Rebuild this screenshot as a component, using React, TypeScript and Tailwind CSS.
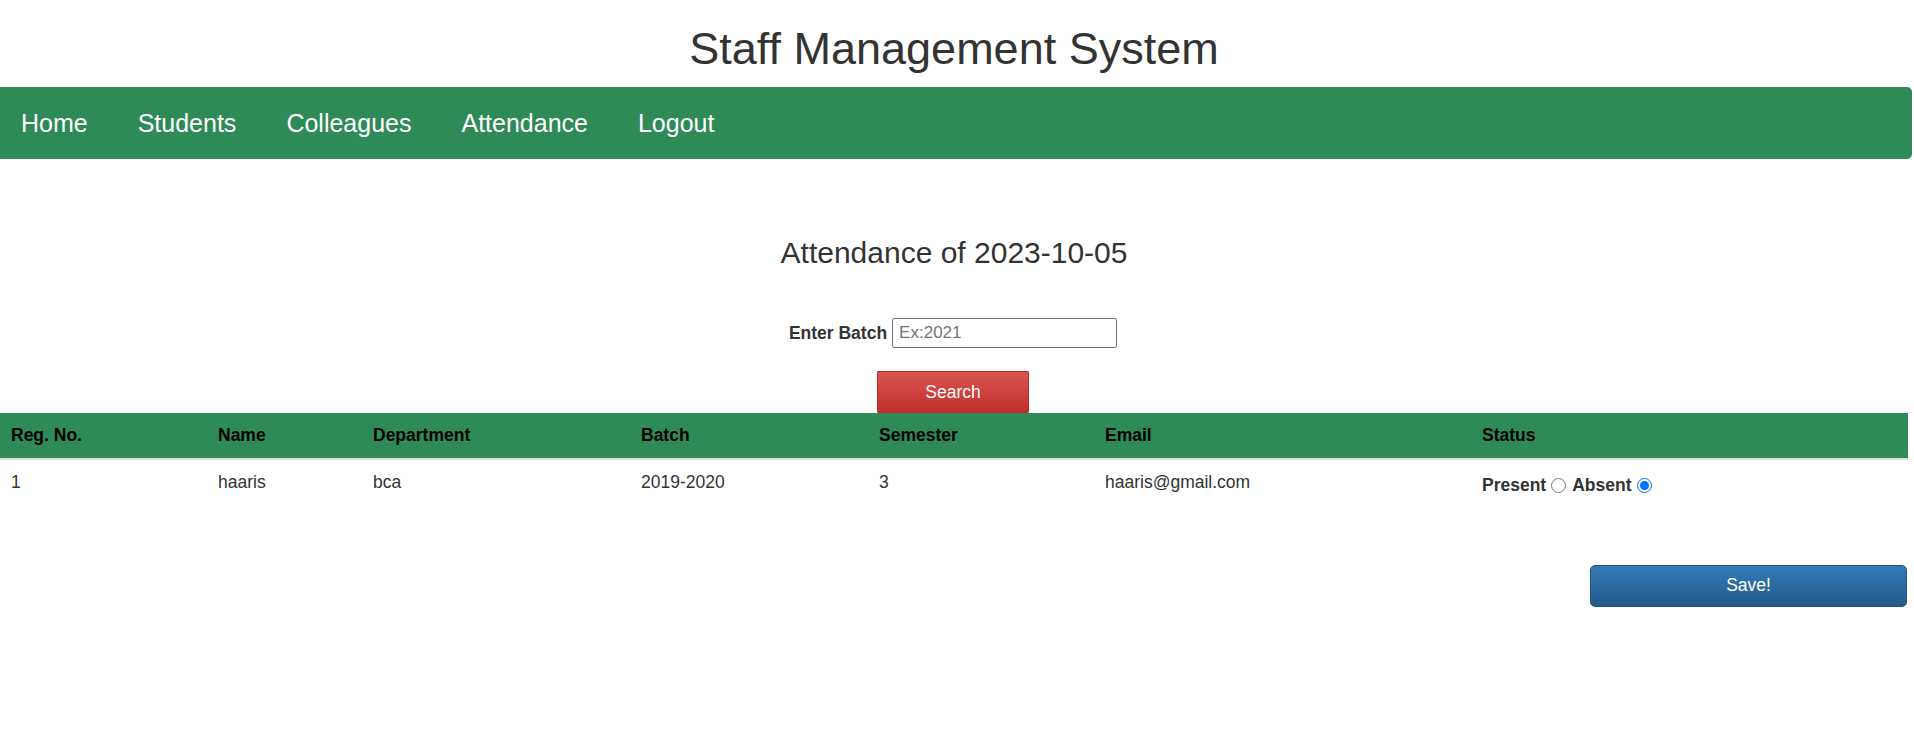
const navLinks = ["Home", "Students", "Colleagues", "Attendance", "Logout"]

const columns = [
  { label: "Reg. No.", width: "w-[208px] pl-[11px]" },
  { label: "Name", width: "w-[155px]" },
  { label: "Department", width: "w-[268px]" },
  { label: "Batch", width: "w-[238px]" },
  { label: "Semester", width: "w-[226px]" },
  { label: "Email", width: "w-[377px]" },
  { label: "Status", width: "" },
]

const rows = [
  { reg: "1", name: "haaris", dept: "bca", batch: "2019-2020", sem: "3", email: "haaris@gmail.com" },
]

function StatusCell({ id }: { id: string }) {
  return (
    <div className="flex items-center font-bold pt-[3px]">
      <label htmlFor={`p-${id}`}>Present</label>
      <input id={`p-${id}`} type="radio" name={`status-${id}`} className="m-0 ml-[5px] w-[15px] h-[15px]" />
      <label htmlFor={`a-${id}`} className="ml-[6px]">Absent</label>
      <input id={`a-${id}`} type="radio" name={`status-${id}`} defaultChecked className="m-0 ml-[5px] w-[15px] h-[15px]" />
    </div>
  )
}

export default function App() {
  return (
    <div className="min-h-screen bg-white text-[#333] font-['Liberation_Sans',Arial,sans-serif]">
      <h1 className="w-[1908px] pt-[24px] text-center text-[45px] leading-[49.5px] font-normal">Staff Management System</h1>

      <nav className="mt-[13.5px] h-[72px] w-[1912px] rounded-r-[5px] bg-[#2e8b57] flex items-center pl-[21px] gap-[50px] text-[25px] text-white">
        {navLinks.map(l => (
          <a key={l} href="#" className="leading-none">{l}</a>
        ))}
      </nav>

      <h3 className="w-[1908px] mt-[77px] text-center text-[30px] leading-[33px] font-normal">Attendance of 2023-10-05</h3>

      <div className="w-[1908px] mt-[49px] flex justify-center items-center h-[30px] text-[17.5px] pr-[2px]">
        <label className="font-bold">Enter Batch</label>
        <input
          type="text"
          placeholder="Ex:2021"
          className="ml-[5px] w-[225px] h-[30px] border border-[#767676] rounded-[2px] pl-[6px] text-[17px] placeholder:text-[#757575] outline-none"
        />
      </div>

      <div className="w-[1908px] mt-[23px] flex justify-center pr-[2px]">
        <button className="w-[152px] h-[42px] bg-linear-to-b from-[#d9534f] to-[#c12e2a] border border-[#b92c28] text-white text-[17.5px] rounded-[1px]">
          Search
        </button>
      </div>

      <table className="w-[1908px] table-fixed border-collapse text-[17.5px] leading-[25px]">
        <thead className="bg-[#2e8b57]">
          <tr>
            {columns.map(c => (
              <th key={c.label} className={`${c.width} text-left font-bold text-black px-[10px] py-[10px] border-b-[2.5px] border-[#ddd]`}>
                {c.label}
              </th>
            ))}
          </tr>
        </thead>
        <tbody>
          {rows.map(r => (
            <tr key={r.reg}>
              <td className="pl-[11px] pr-[10px] py-[10px] align-top">{r.reg}</td>
              <td className="px-[10px] py-[10px] align-top">{r.name}</td>
              <td className="px-[10px] py-[10px] align-top">{r.dept}</td>
              <td className="px-[10px] py-[10px] align-top">{r.batch}</td>
              <td className="px-[10px] py-[10px] align-top">{r.sem}</td>
              <td className="px-[10px] py-[10px] align-top">{r.email}</td>
              <td className="px-[10px] py-[10px] align-top">
                <StatusCell id={r.reg} />
              </td>
            </tr>
          ))}
        </tbody>
      </table>

      <div className="mt-[56.5px] flex justify-end pr-[7px]">
        <button className="w-[317px] h-[42px] bg-linear-to-b from-[#337ab7] to-[#265a88] border border-[#245580] rounded-[5px] text-white text-[17.5px]">
          Save!
        </button>
      </div>
    </div>
  )
}
